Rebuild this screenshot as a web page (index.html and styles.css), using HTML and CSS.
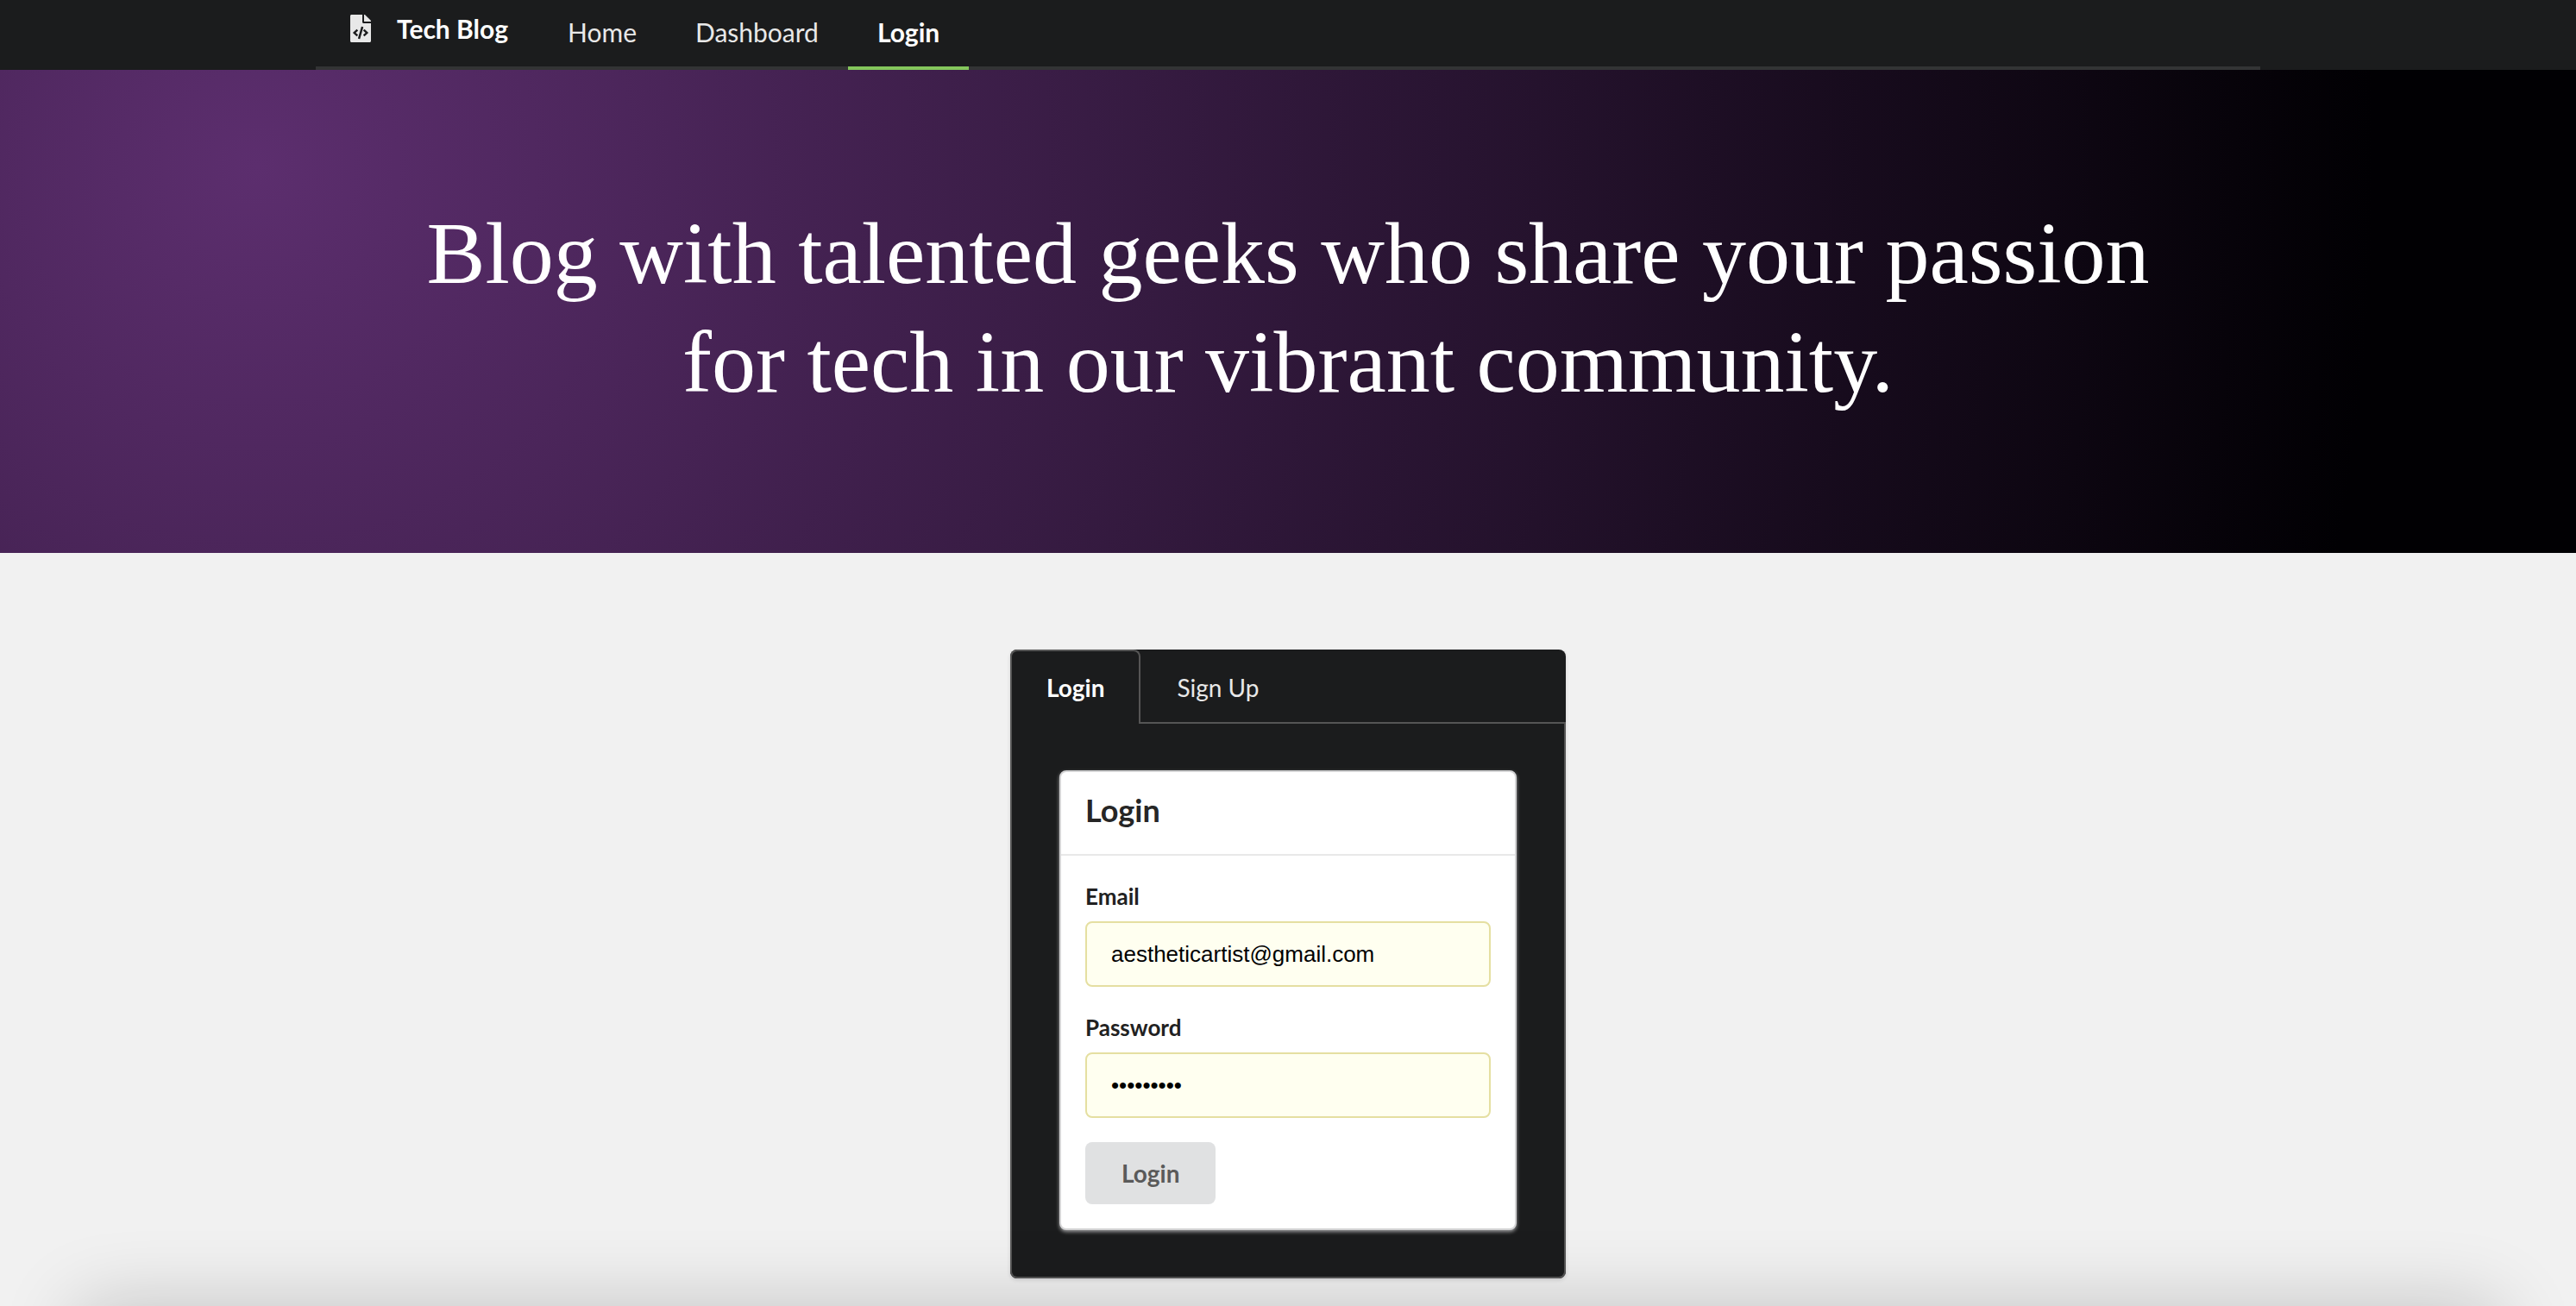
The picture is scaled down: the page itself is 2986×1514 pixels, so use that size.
FILE: index.html
```html
<!DOCTYPE html>
<html lang="en">
<head>
  <meta charset="utf-8">
  <meta name="viewport" content="width=device-width, initial-scale=1">
  <title>Tech Blog - Login</title>
  <link rel="stylesheet" href="styles.css">
</head>
<body>
  <header class="site-header">
    <nav class="container menu">
      <a class="menu-item brand" href="#">
        <svg class="brand-icon" viewBox="0 0 384 512" aria-hidden="true">
          <path fill="currentColor" d="M384 121.900V128H256V0h6.100c6.400 0 12.500 2.500 17 7l97.900 98c4.500 4.500 7 10.600 7 16.900zM248 160c-13.200 0-24-10.800-24-24V0H24C10.700 0 0 10.700 0 24v464c0 13.300 10.700 24 24 24h336c13.300 0 24-10.700 24-24V160H248zM123.200 400.500a5.400 5.400 0 0 1-7.600.200l-64.900-60.800a5.400 5.400 0 0 1 0-7.900l64.900-60.800a5.400 5.400 0 0 1 7.600.200l19.600 20.900a5.400 5.400 0 0 1-.400 7.700L101.700 336l40.700 35.900a5.400 5.400 0 0 1 .400 7.700l-19.600 20.900zm51.300 50.500-27.500-8a5.400 5.400 0 0 1-3.700-6.700l61.500-211.700a5.400 5.400 0 0 1 6.700-3.700l27.500 8a5.400 5.400 0 0 1 3.700 6.700L181.200 447.300a5.400 5.400 0 0 1-6.700 3.700zm158.800-111-64.900 60.800a5.400 5.400 0 0 1-7.600-.200l-19.600-20.900a5.400 5.400 0 0 1 .400-7.700L282.300 336l-40.700-35.900a5.400 5.400 0 0 1-.400-7.700l19.600-20.900a5.400 5.400 0 0 1 7.600-.200l64.900 60.800a5.400 5.400 0 0 1 0 7.900z"/>
        </svg>
        <span>Tech Blog</span>
      </a>
      <a class="menu-item" href="#">Home</a>
      <a class="menu-item" href="#">Dashboard</a>
      <a class="menu-item active" href="#" aria-current="page">Login</a>
    </nav>
  </header>

  <section class="hero">
    <h1 class="container hero-title">Blog with talented geeks who share your passion for tech in our vibrant community.</h1>
  </section>

  <main class="content">
    <section class="auth">
      <div class="tabs" role="tablist">
        <button class="tab active" type="button" role="tab" aria-selected="true">Login</button>
        <button class="tab" type="button" role="tab" aria-selected="false">Sign Up</button>
      </div>
      <div class="tab-panel" role="tabpanel">
        <div class="card">
          <h2 class="card-title">Login</h2>
          <form class="form">
            <div class="field">
              <label class="label" for="email">Email</label>
              <input class="input" id="email" type="email" value="aestheticartist@gmail.com">
            </div>
            <div class="field">
              <label class="label" for="password">Password</label>
              <input class="input" id="password" type="password" value="techblog1">
            </div>
            <button class="submit" type="submit">Login</button>
          </form>
        </div>
      </div>
    </section>
  </main>
</body>
</html>
```
FILE: styles.css
```css
* {
  box-sizing: border-box;
}

body {
  margin: 0;
  background: #f1f1f1;
  color: #212121;
  font-family: Lato, "Liberation Sans", sans-serif;
  font-size: 28px;
}

/* Soft shadow rising from the bottom edge of the window */
body::after {
  content: "";
  position: fixed;
  top: 100%;
  left: 90px;
  right: 90px;
  height: 200px;
  box-shadow: 0 0 90px rgba(0, 0, 0, 0.2);
  pointer-events: none;
}

.container {
  width: 100%;
  max-width: 2254px;
  margin: 0 auto;
}

/* Navigation */
.site-header {
  background: #1b1c1d;
}

.menu {
  display: flex;
  border-bottom: 4px solid #333435;
}

.menu-item {
  margin-bottom: -4px;
  padding: 22px 34px 25px;
  border-bottom: 4px solid transparent;
  color: #e8e8e8;
  font-size: 30px;
  line-height: 30px;
  text-decoration: none;
}

.menu-item.active {
  border-color: #84c65c;
  color: #fff;
  font-weight: 700;
}

.brand {
  display: flex;
  align-items: flex-start;
  gap: 30px;
  padding: 18px 35px 28px 40px;
  color: #fff;
  font-weight: 700;
}

.brand-icon {
  width: 24px;
  height: 32px;
  margin-top: -1px;
  color: #e8e8e8;
}

/* Hero */
.hero {
  padding: 150px 0 158px;
  background: radial-gradient(circle at 10% 20%, #5c2e6e 0%, #010003 90%);
}

.hero-title {
  padding: 0 100px;
  color: #fff;
  font-family: "Liberation Serif", serif;
  font-size: 102px;
  font-weight: 400;
  line-height: 126px;
  text-align: center;
}

/* Login panel */
.content {
  padding: 112px 20px 32px;
}

.auth {
  max-width: 644px;
  margin: 0 auto;
  border-radius: 8px;
  background: #1b1c1d;
  box-shadow: 0 2px 4px rgba(34, 36, 38, 0.15);
}

.tabs {
  display: flex;
  border-bottom: 2px solid #555;
}

.tab {
  margin: 0 0 -2px;
  padding: 28px 40px;
  border: 2px solid transparent;
  border-bottom: 0;
  border-radius: 8px 8px 0 0;
  background: transparent;
  color: #e8e8e8;
  font-family: inherit;
  font-size: 28px;
  line-height: 28px;
}

.tab.active {
  border-color: #555;
  background: #1b1c1d;
  color: #fff;
  font-weight: 700;
}

.tab-panel {
  padding: 54px 55px;
  border: 2px solid #555;
  border-top: 0;
  border-radius: 0 0 8px 8px;
}

.card {
  border: 2px solid #d4d4d5;
  border-radius: 8px;
  background: #fff;
  box-shadow: 0 2px 4px rgba(212, 212, 213, 0.7);
}

.card-title {
  margin: 0;
  padding: 26px 28px 33px;
  border-bottom: 2px solid #e8e8e8;
  color: #262626;
  font-size: 36px;
  line-height: 36px;
}

.form {
  padding: 34px 28px 28px;
}

.field {
  margin-bottom: 34px;
}

.field:last-of-type {
  margin-bottom: 28px;
}

.label {
  display: block;
  margin-bottom: 16px;
  font-size: 26px;
  font-weight: 700;
  line-height: 26px;
}

.input {
  display: block;
  width: 100%;
  padding: 22px 28px;
  border: 2px solid #e5dfa1;
  border-radius: 8px;
  background: #fffff0;
  color: #000;
  font-family: "Liberation Sans", sans-serif;
  font-size: 26px;
  line-height: 28px;
}

.submit {
  padding: 22px 42px;
  border: 0;
  border-radius: 8px;
  background: #e0e1e2;
  color: #5a5a5a;
  font-family: inherit;
  font-size: 28px;
  font-weight: 700;
  line-height: 28px;
}
```
